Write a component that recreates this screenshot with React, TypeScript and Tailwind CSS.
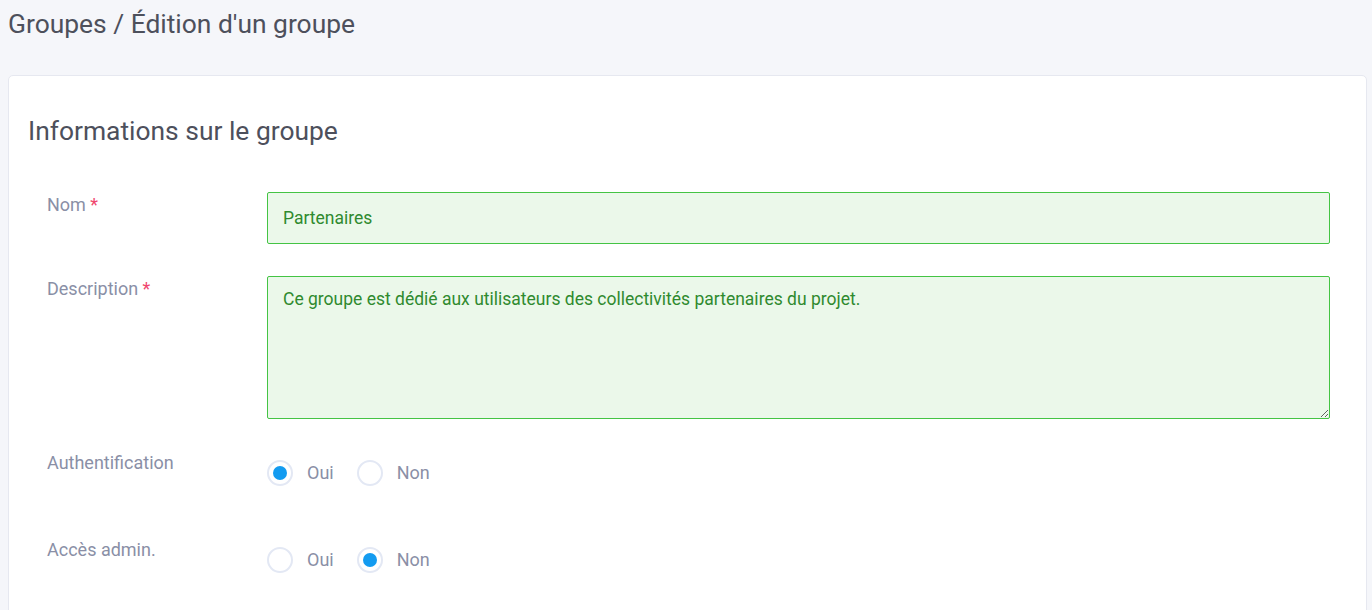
import React from "react";

function Radio({ checked, label }: { checked: boolean; label: string }) {
  return (
    <div className="flex items-center">
      <span className="flex h-[26px] w-[26px] items-center justify-center rounded-full border-2 border-[#e3e8f4] bg-white">
        {checked && <span className="h-[14px] w-[14px] rounded-full bg-[#139bf0]" />}
      </span>
      <span className="ml-[14px] text-[18px] leading-[24px] text-[#8a8fa6]">{label}</span>
    </div>
  );
}

export default function App() {
  return (
    <div
      className="min-h-[610px] bg-[#f5f6fa] pl-[8px] pr-[5px] pt-[8px]"
      style={{ fontFamily: "Roboto, 'Noto Sans', sans-serif" }}
    >
      <h1 className="text-[26.4px] leading-[32px] text-[#4d505c]">Groupes / Édition d'un groupe</h1>
      <div className="mt-[35px] h-[600px] rounded-[5px] border border-[#e6e8f0] bg-white pt-[39px]">
        <h2 className="pl-[19px] text-[26.4px] leading-[32px] text-[#4d505c]">Informations sur le groupe</h2>
        <div className="mt-[45px] pl-[38px] pr-[36px]">
          <div className="flex items-start">
            <div className="mt-[1px] w-[220px] text-[18px] leading-[24px] text-[#8a8fa6]">
              Nom <span className="text-[#f0466e]">*</span>
            </div>
            <input
              readOnly
              value="Partenaires"
              className="h-[52px] flex-1 rounded-[2px] border border-[#44c444] bg-[#ebf8ea] px-[15px] text-[17.5px] text-[#2f8a2f] outline-none"
            />
          </div>
          <div className="mt-[32px] flex items-start">
            <div className="mt-[1px] w-[220px] text-[18px] leading-[24px] text-[#8a8fa6]">
              Description <span className="text-[#f0466e]">*</span>
            </div>
            <textarea
              readOnly
              value="Ce groupe est dédié aux utilisateurs des collectivités partenaires du projet."
              className="h-[143px] flex-1 resize-y rounded-[2px] border border-[#44c444] bg-[#ebf8ea] px-[15px] py-[10px] text-[17.5px] leading-[24px] text-[#2f8a2f] outline-none"
            />
          </div>
          <div className="mt-[32px] flex items-start">
            <div className="w-[220px] text-[18px] leading-[24px] text-[#8a8fa6]">Authentification</div>
            <div className="mt-[9px] flex gap-[23px]">
              <Radio checked label="Oui" />
              <Radio checked={false} label="Non" />
            </div>
          </div>
          <div className="mt-[52px] flex items-start">
            <div className="w-[220px] text-[18px] leading-[24px] text-[#8a8fa6]">Accès admin.</div>
            <div className="mt-[9px] flex gap-[23px]">
              <Radio checked={false} label="Oui" />
              <Radio checked label="Non" />
            </div>
          </div>
        </div>
      </div>
    </div>
  );
}
